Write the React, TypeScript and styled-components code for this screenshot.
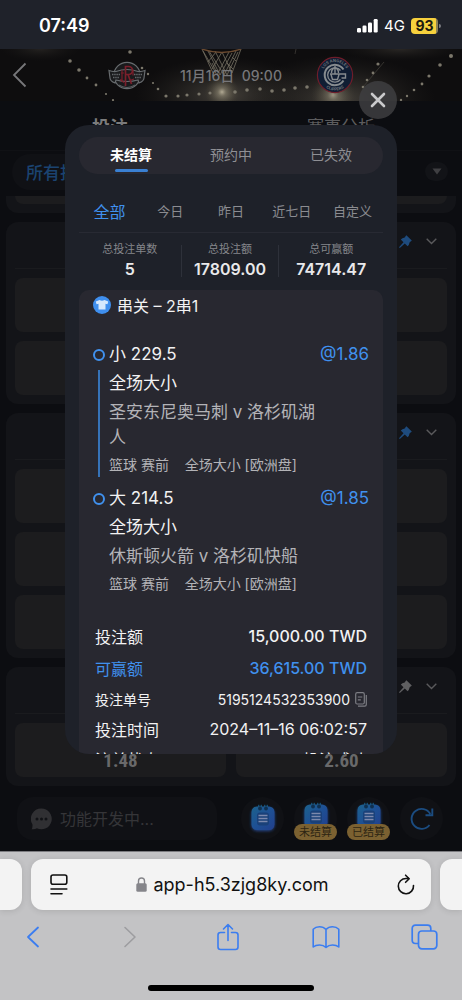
import React from "react";
import styled, { createGlobalStyle, css } from "styled-components";

const Global = createGlobalStyle`
  *, *::before, *::after { box-sizing: border-box; }
  body {
    margin: 0;
    background: #0c0d11;
    font-family: Inter, "Noto Sans CJK SC", sans-serif;
  }
  button, input {
    font-family: inherit;
    font-size: inherit;
    color: inherit;
    border: 0;
    margin: 0;
    padding: 0;
    background: none;
  }
  svg { display: block; flex: none; }
`;

const Page = styled.div`
  display: flex;
  flex-direction: column;
  min-height: 100vh;
`;

/* ---------- status bar ---------- */

const StatusBar = styled.header`
  display: flex;
  align-items: center;
  justify-content: space-between;
  height: 49px;
  padding: 2px 24px 0 39px;
  background: #1f222a;
  color: #fff;
`;

const Clock = styled.span`
  font-size: 18px;
  font-weight: 600;
`;

const StatusIcons = styled.div`
  display: flex;
  align-items: center;
  gap: 6px;
  font-size: 15px;
`;

const Battery = styled.span`
  position: relative;
  width: 27px;
  height: 16px;
  border-radius: 4px;
  background: linear-gradient(90deg, #f7d13d 25px, #8d8256 25px);
  color: #1c1a10;
  font-size: 14px;
  font-weight: 700;
  line-height: 16px;
  text-align: center;
  &::after {
    content: "";
    position: absolute;
    right: -3px;
    top: 6px;
    width: 2px;
    height: 4px;
    border-radius: 0 2px 2px 0;
    background: #7d7e83;
  }
`;

/* ---------- match page ---------- */

const Match = styled.main`
  position: relative;
  flex: 1;
  display: flex;
  flex-direction: column;
  background: #0c0d11;
`;

const Banner = styled.div`
  position: relative;
  display: grid;
  grid-template-columns: 74px 1fr auto 1fr 74px;
  align-items: center;
  height: 52px;
  overflow: hidden;
  color: #77777a;
`;

const Arena = styled.svg`
  position: absolute;
  inset: 0;
  width: 100%;
  height: 100%;
`;

const BannerItem = styled.div`
  position: relative;
  display: flex;
  justify-content: center;
`;

const BackButton = styled.button`
  position: relative;
  justify-self: start;
  padding-left: 12px;
`;

const Kickoff = styled.time`
  position: relative;
  font-size: 14px;
  font-weight: 500;
  white-space: nowrap;
`;

const MatchTabs = styled.nav`
  display: grid;
  grid-template-columns: 10fr 11fr;
  height: 50px;
  border-bottom: 1px solid #101115;
`;

const MatchTab = styled.button<{ $active?: boolean }>`
  color: ${(p) => (p.$active ? "#7b7b7c" : "#5c5c5e")};
  font-size: ${(p) => (p.$active ? 18 : 17)}px;
  font-weight: ${(p) => (p.$active ? 600 : 400)};
`;

const MarketBar = styled.div`
  display: flex;
  align-items: center;
  justify-content: space-between;
  height: 45px;
  padding: 0 14px 4px 12px;
`;

const MarketChip = styled.button`
  height: 36px;
  padding: 0 14px;
  border-radius: 18px;
  background: #101115;
  color: #1b4370;
  font-size: 17px;
  font-weight: 500;
`;

const FoldButton = styled.button`
  display: grid;
  place-items: center;
  width: 23px;
  height: 19px;
  border-radius: 10px;
  background: #121317;
`;

const MarketList = styled.div`
  display: flex;
  flex-direction: column;
  gap: 9px;
  padding: 0 6px;
`;

const Card = styled.section<{ $tail?: boolean }>`
  padding: 0 9px 9px;
  border-radius: ${(p) => (p.$tail ? "0 0 12px 12px" : "12px")};
  background: #131418;
`;

const CardHead = styled.div`
  display: flex;
  align-items: center;
  justify-content: flex-end;
  gap: 14px;
  height: 47px;
  margin-bottom: 9px;
  padding: 0 10px 8px;
  border-bottom: 1px solid #1a1b1e;
`;

const IconButton = styled.button`
  display: grid;
  place-items: center;
`;

const Rows = styled.div`
  display: grid;
  gap: 9px;
`;

const OddsRow = styled.div`
  display: grid;
  grid-template-columns: 1fr 1fr;
  gap: 10px;
`;

const Odds = styled.button<{ $tail?: boolean }>`
  display: flex;
  align-items: flex-end;
  justify-content: center;
  height: ${(p) => (p.$tail ? 8 : 54)}px;
  padding-bottom: 5px;
  border-radius: ${(p) => (p.$tail ? "0 0 8px 8px" : "8px")};
  background: #1c1c1e;
  color: #69696a;
  font-family: "Liberation Sans Narrow", "Roboto Condensed", "DejaVu Sans Condensed", sans-serif;
  font-size: 19px;
  font-weight: 700;
`;

const ActionBar = styled.div`
  display: flex;
  align-items: center;
  gap: 10px;
  padding: 11px 19px 10px 17px;
`;

const ChatBox = styled.label`
  flex: 1;
  min-width: 0;
  display: flex;
  align-items: center;
  gap: 8px;
  height: 43px;
  margin-right: 14px;
  padding: 0 14px;
  border-radius: 16px;
  background: #101115;
`;

const ChatInput = styled.input`
  flex: 1;
  min-width: 0;
  font-size: 16px;
  outline: 0;
  &::placeholder { color: #353538; opacity: 1; }
`;

const RoundButton = styled.button<{ $raised?: boolean }>`
  position: relative;
  flex: none;
  display: flex;
  justify-content: center;
  align-items: ${(p) => (p.$raised ? "flex-start" : "center")};
  width: 43px;
  height: 43px;
  padding-top: ${(p) => (p.$raised ? 4 : 0)}px;
  border-radius: 50%;
  background: #101115;
`;

const SettleBadge = styled.span`
  position: absolute;
  left: 0;
  right: 0;
  bottom: 0;
  height: 16px;
  border-radius: 8px;
  background: #7b6131;
  color: #2d2513;
  font-size: 11px;
  line-height: 16px;
  text-align: center;
`;

/* ---------- bet record dialog ---------- */

const Overlay = styled.div`
  position: absolute;
  inset: 0;
  display: flex;
  padding: 76px 65px 97px;
`;

const Dialog = styled.section`
  flex: 1;
  min-width: 0;
  display: flex;
  flex-direction: column;
  padding: 12px 14px 0;
  border-radius: 24px;
  background: #1e2129;
  overflow: hidden;
`;

const CloseButton = styled.button`
  position: absolute;
  top: 32px;
  right: 65px;
  display: grid;
  place-items: center;
  width: 38px;
  height: 38px;
  border-radius: 50%;
  background: rgba(62, 62, 65, 0.85);
`;

const StateTabs = styled.nav`
  flex: none;
  display: grid;
  grid-template-columns: repeat(3, 1fr);
  height: 37px;
  padding: 0 2px;
  border-radius: 19px;
  background: #282830;
`;

const StateTab = styled.button<{ $active?: boolean }>`
  display: flex;
  flex-direction: column;
  align-items: center;
  gap: 3px;
  padding-top: 7px;
  font-size: 14px;
  line-height: 22px;
  color: #8f8f94;
  ${(p) =>
    p.$active &&
    css`
      color: #fff;
      font-weight: 600;
      &::after {
        content: "";
        width: 33px;
        height: 3px;
        border-radius: 2px;
        background: #3a80d2;
      }
    `}
`;

const RangeTabs = styled.nav`
  flex: none;
  display: grid;
  grid-template-columns: repeat(5, 1fr);
  height: 44px;
  margin-top: 15px;
  border-bottom: 1px solid #282a33;
`;

const RangeTab = styled.button<{ $active?: boolean }>`
  white-space: nowrap;
  color: ${(p) => (p.$active ? "#4091ee" : "#8b8c91")};
  font-size: ${(p) => (p.$active ? 16 : 13)}px;
`;

const Stats = styled.dl`
  flex: none;
  display: grid;
  grid-template-columns: 102fr 98fr 105fr;
  margin: 12px 0 13px;
`;

const Stat = styled.div`
  display: flex;
  flex-direction: column;
  align-items: center;
  justify-content: center;
  height: 32px;
  & + & { border-left: 1px solid #2e313a; }
`;

const StatLabel = styled.dt`
  flex: none;
  color: #85868b;
  font-size: 11px;
  line-height: 16px;
`;

const StatValue = styled.dd`
  flex: none;
  margin: 0;
  color: #e9e9eb;
  font-size: 16px;
  font-weight: 600;
  line-height: 24px;
`;

const Ticket = styled.article`
  flex: 1 0 0;
  min-height: 0;
  overflow: hidden;
  border-radius: 10px 10px 0 0;
  background: #282830;
  color: #f2f2f3;
`;

const TicketHead = styled.h2`
  display: flex;
  align-items: center;
  gap: 6px;
  height: 30px;
  margin: 0 0 19px;
  padding: 0 14px;
  font-size: 16px;
  font-weight: 400;
`;

const Legs = styled.div`
  display: grid;
  gap: 6px;
  padding: 0 14px 0 13px;
`;

const Leg = styled.div`
  display: flex;
  gap: 4px;
`;

const Rail = styled.div<{ $linked?: boolean }>`
  flex: none;
  display: flex;
  flex-direction: column;
  align-items: center;
  gap: 9px;
  width: 13px;
  padding-top: 10px;
  &::before {
    content: "";
    width: 12px;
    height: 12px;
    border: 2px solid #4091ee;
    border-radius: 50%;
  }
  ${(p) =>
    p.$linked &&
    css`
      &::after {
        content: "";
        flex: 1;
        width: 2px;
        background: #3673b8;
      }
    `}
`;

const LegBody = styled.div`
  flex: 1;
  min-width: 0;
`;

const LegTitle = styled.div`
  display: flex;
  justify-content: space-between;
  font-size: 17px;
  line-height: 30px;
`;

const Price = styled.span`
  color: #4091ee;
`;

const LegMarket = styled.div`
  font-size: 17px;
  line-height: 28px;
`;

const LegTeams = styled.div`
  padding: 3px 46px 3px 0;
  color: #b3b3b7;
  font-size: 17px;
  line-height: 25px;
`;

const LegMeta = styled.div`
  color: #b3b3b7;
  font-size: 14px;
  line-height: 24px;
  white-space: pre;
`;

const Totals = styled.dl`
  margin: 24px 0 0;
  padding: 0 16px;
`;

const Line = styled.div<{ $tone?: "main" | "win" | "small" }>`
  display: flex;
  align-items: center;
  justify-content: space-between;
  height: ${(p) => (p.$tone === "main" || p.$tone === "win" ? 32 : 30)}px;
  color: ${(p) => (p.$tone === "win" ? "#4091ee" : "inherit")};
  font-size: ${(p) => (p.$tone === "small" ? 14 : 16)}px;
  white-space: nowrap;
  dd {
    display: flex;
    align-items: center;
    gap: 5px;
    margin: 0;
    font-weight: ${(p) => (p.$tone === "main" || p.$tone === "win" ? 500 : 400)};
  }
`;

/* ---------- browser chrome ---------- */

const Browser = styled.footer`
  display: flex;
  flex-direction: column;
  align-items: center;
  height: 149px;
  padding-top: 8px;
  background: #c3c3c5;
  box-shadow: inset 0 1px #7c7c80;
`;

const TabStrip = styled.div`
  display: flex;
  gap: 9px;
  width: 100%;
`;

const TabPeek = styled.div<{ $side: "left" | "right" }>`
  width: 22px;
  height: 51px;
  border-radius: ${(p) => (p.$side === "left" ? "0 12px 12px 0" : "12px 0 0 12px")};
  background: #f3f3f3;
  box-shadow: 0 1px 6px rgba(0, 0, 0, 0.12);
`;

const AddressBar = styled.div`
  flex: 1;
  display: flex;
  align-items: center;
  justify-content: space-between;
  height: 51px;
  padding: 0 16px 0 19px;
  border-radius: 12px;
  background: #f3f3f3;
  box-shadow: 0 1px 6px rgba(0, 0, 0, 0.12);
`;

const Address = styled.button`
  display: flex;
  align-items: center;
  gap: 6px;
  color: #111;
  font-size: 18px;
`;

const Toolbar = styled.nav`
  display: flex;
  align-items: center;
  justify-content: space-between;
  width: 100%;
  height: 56px;
  padding: 0 24px 2px 18px;
  button { width: 28px; }
`;

const HomeBar = styled.div`
  width: 166px;
  height: 6px;
  margin-top: 19px;
  border-radius: 3px;
  background: #000;
`;

/* ---------- drawings ---------- */

const lights: [number, number, number][] = [
  [70, 12, 1.8], [79, 21, 1.8], [87, 29, 1.4], [96, 36, 1.4], [106, 45, 1.1], [113, 51, 1.1],
  [130, 3, 1.8], [142, 19, 1.3], [148, 25, 1.2], [153, 34, 1.1], [158, 40, 1.3],
  [166, 47, 1.6], [178, 47, 1.6], [187, 46, 1.6], [199, 45, 1.6], [210, 44, 1.6],
  [235, 43, 1.8], [247, 41, 1.8], [260, 40, 1.8], [272, 42, 1.8], [284, 41, 1.8], [295, 39, 1.8], [307, 38, 1.8],
  [363, 38, 1.3], [367, 31, 1.3], [373, 24, 1.4], [378, 15, 1.6],
  [401, 51, 1.2], [407, 47, 1.2], [414, 41, 1.3], [422, 35, 1.4], [429, 27, 1.6], [440, 16, 1.8], [451, 7, 2],
];

const ArenaDrawing = () => (
  <Arena viewBox="0 0 462 52" preserveAspectRatio="xMidYMid slice" aria-hidden="true">
    <defs>
      <radialGradient id="glow">
        <stop offset="0" stopColor="#b3ab95" />
        <stop offset="0.25" stopColor="#8f8873" stopOpacity="0.6" />
        <stop offset="1" stopColor="#4a4434" stopOpacity="0" />
      </radialGradient>
      <radialGradient id="haze">
        <stop offset="0" stopColor="#57524a" stopOpacity="0.75" />
        <stop offset="1" stopColor="#2a2824" stopOpacity="0" />
      </radialGradient>
    </defs>
    <rect width="462" height="52" fill="#0e0d0e" />
    <ellipse cx="225" cy="46" rx="90" ry="38" fill="url(#haze)" />
    <ellipse cx="340" cy="50" rx="95" ry="44" fill="url(#haze)" />
    <ellipse cx="400" cy="0" rx="60" ry="12" fill="url(#haze)" opacity="0.5" />
    <ellipse cx="40" cy="0" rx="40" ry="12" fill="url(#haze)" opacity="0.4" />
    <circle cx="222" cy="43" r="17" fill="url(#glow)" />
    <circle cx="333" cy="46" r="22" fill="url(#glow)" opacity="0.8" />
    <g fill="none" stroke="#6b665a" strokeWidth="0.9">
      <path d="M202 0L213 24M208 2L220 26L232 4M215 2L227 26L238 3M222 3L232 24L241 0M236 2L224 26L209 2M229 3L217 26L203 2M222 3L212 20M216 3L208 13" />
      <path d="M232 8L236 12M227 14L233 20M212 14L216 22" />
    </g>
    <path d="M202 0Q222 7 241 0" fill="none" stroke="#6b4a30" strokeWidth="1.4" />
    <path d="M384 13L363 38M296 0L295 5" stroke="#45423c" strokeWidth="0.7" />
    <g fill="#7b776b">
      {lights.map(([x, y, r]) => (
        <circle key={`${x}-${y}`} cx={x} cy={y} r={r} />
      ))}
    </g>
  </Arena>
);

const HomeLogo = () => (
  <svg width="38" height="29" viewBox="0 0 38 29" role="img" aria-label="Rockets">
    <circle cx="19" cy="14.5" r="13.2" fill="#191a1c" stroke="#686c6f" strokeWidth="1.2" />
    <path d="M1 9.5Q5 11 8 10.5Q19 6.5 30 10.5Q33 11 37 9.5L36 17Q36 20 31 22L30 19Q19 22 8 19L7 22Q2 20 2 17Z" fill="#1a1b1d" stroke="#686c6f" strokeWidth="1.2" />
    <path d="M4 13.5h8M5 16.5h6M26 13.5h8M27 16.5h6" stroke="#63676a" strokeWidth="1.6" strokeDasharray="1.5 .7" />
    <g fill="none" stroke="#7b1f2b" strokeWidth="1.7">
      <path d="M17.500 25V5.500h3a3.800 3.800 0 0 1 0 8H17.500M20 13.500L23.500 23" />
      <path d="M14 9v12M12 18.500l4 3M25 9.500v5M13 12h3M22 19.500l4-1.500" strokeWidth="1.2" />
    </g>
    <path d="M11 24Q19 29 27 24" fill="none" stroke="#5e6265" strokeWidth="1" />
  </svg>
);

const AwayLogo = () => (
  <svg width="38" height="38" viewBox="0 0 38 38" role="img" aria-label="Los Angeles Clippers">
    <defs>
      <path id="arcTop" d="M6 19a13 13 0 0 1 26 0" />
      <path id="arcBottom" d="M3.500 19a15.500 15.500 0 0 0 31 0" />
    </defs>
    <circle cx="19" cy="19" r="17.600" fill="#101d33" stroke="#6f1d2a" strokeWidth="1.2" />
    <g fill="#6c7279" fontFamily="Inter, sans-serif" fontSize="4" fontWeight="700" textAnchor="middle">
      <text><textPath href="#arcTop" startOffset="50%">LOS ANGELES</textPath></text>
      <text><textPath href="#arcBottom" startOffset="50%">CLIPPERS</textPath></text>
    </g>
    <path d="M27.500 13.500A10.200 10.200 0 1 0 27.500 24.500" fill="none" stroke="#868b8f" strokeWidth="2" />
    <path d="M24.500 14.500A7.200 7.200 0 1 0 24.500 23.500" fill="none" stroke="#868b8f" strokeWidth="1.3" />
    <path d="M14 18h15.500v4h-4M15 18.500l1.500 5h5l1.500-5M19 10v8M15.500 17q0-4 3-5M22.500 17q0-4-3-5" fill="none" stroke="#868b8f" strokeWidth="1.4" />
  </svg>
);

const Pin = ({ color }: { color: string }) => (
  <svg width="13" height="13" viewBox="0 0 13 13" fill={color} aria-hidden="true">
    <path d="M7.400.2L12.800 5.600L11.800 6.500Q11 6.600 10.600 7.400Q10.200 9.800 8.600 11.200L5.800 8.500L.8 13L0 12.200L4.500 7.200L1.800 4.400Q3.200 2.800 5.600 2.400Q6.400 2 6.400 1.200Z" />
  </svg>
);

const Chevron = () => (
  <svg width="11" height="7" viewBox="0 0 11 7" fill="none" stroke="#5a5a5c" strokeWidth="1.4" aria-hidden="true">
    <path d="M.7.8L5.500 5.600L10.300.8" />
  </svg>
);

const Notepad = () => (
  <svg width="32" height="32" viewBox="0 0 32 32" aria-hidden="true">
    <defs>
      <linearGradient id="pad" x1="0" y1="0" x2="1" y2="1">
        <stop offset="0" stopColor="#1c628d" />
        <stop offset="0.5" stopColor="#1e5094" />
        <stop offset="1" stopColor="#223f8c" />
      </linearGradient>
      <filter id="padGlow" x="-30%" y="-30%" width="160%" height="160%">
        <feGaussianBlur stdDeviation="1.8" />
      </filter>
    </defs>
    <rect x="4.500" y="5" width="23" height="23" rx="6" fill="#26498f" filter="url(#padGlow)" />
    <rect x="4.500" y="3.500" width="23" height="23.500" rx="5.500" fill="url(#pad)" />
    <rect x="10" y="9.500" width="12" height="13" rx="3" fill="#1a4179" />
    <path d="M11.500 12.500h9M11.500 15.500h9M11.500 18.500h9" stroke="#7c89ad" strokeWidth="1.4" />
    <circle cx="13" cy="5.500" r="1.900" fill="#10304f" />
    <circle cx="19" cy="5.500" r="1.900" fill="#10304f" />
    <path d="M11.800 4V1.800M14.200 4V1.800M17.800 4V1.800M20.200 4V1.800" stroke="#1b6494" strokeWidth="1" />
  </svg>
);

const markets = [
  { pin: "#1e4b7d", rows: 2 },
  { pin: "#1e4b7d", rows: 3 },
  { pin: "#5f5f61", rows: 1, odds: ["1.48", "2.60"] },
];

const legs = [
  { pick: "小 229.5", price: "@1.86", teams: "圣安东尼奥马刺 v 洛杉矶湖人", linked: true },
  { pick: "大 214.5", price: "@1.85", teams: "休斯顿火箭 v 洛杉矶快船", linked: false },
];

const stats = [
  ["总投注单数", "5"],
  ["总投注额", "17809.00"],
  ["总可赢额", "74714.47"],
];

export default function App() {
  return (
    <Page>
      <Global />
      <StatusBar>
        <Clock>07:49</Clock>
        <StatusIcons>
          <svg width="21" height="14" viewBox="0 0 21 14" fill="#fff" aria-hidden="true">
            <rect x="0" y="9" width="4" height="4.500" rx="1.200" />
            <rect x="5.500" y="6.500" width="4" height="7" rx="1.200" />
            <rect x="11" y="3.500" width="4" height="10" rx="1.200" />
            <rect x="16.700" y="0" width="4" height="13.500" rx="1.200" />
          </svg>
          <span>4G</span>
          <Battery>93</Battery>
        </StatusIcons>
      </StatusBar>

      <Match>
        <Banner>
          <ArenaDrawing />
          <BackButton aria-label="返回">
            <svg width="15" height="26" viewBox="0 0 15 26" fill="none" stroke="#77777a" strokeWidth="1.8">
              <path d="M13.500 1.500L2 13L13.500 24.500" />
            </svg>
          </BackButton>
          <BannerItem><HomeLogo /></BannerItem>
          <Kickoff>11月16日&nbsp; 09:00</Kickoff>
          <BannerItem><AwayLogo /></BannerItem>
        </Banner>

        <MatchTabs>
          <MatchTab $active>投注</MatchTab>
          <MatchTab>赛事分析</MatchTab>
        </MatchTabs>

        <MarketBar>
          <MarketChip>所有投注</MarketChip>
          <FoldButton aria-label="收起">
            <svg width="10" height="7" viewBox="0 0 10 7" fill="#3f3f42"><path d="M.5.500h9L5 6.500Z" /></svg>
          </FoldButton>
        </MarketBar>

        <MarketList>
          <Card $tail>
            <OddsRow>
              <Odds $tail aria-label="赔率" />
              <Odds $tail aria-label="赔率" />
            </OddsRow>
          </Card>
          {markets.map((m, i) => (
            <Card key={i}>
              <CardHead>
                <IconButton aria-label="置顶"><Pin color={m.pin} /></IconButton>
                <IconButton aria-label="展开"><Chevron /></IconButton>
              </CardHead>
              <Rows>
                {Array.from({ length: m.rows }, (_, r) => (
                  <OddsRow key={r}>
                    <Odds aria-label="赔率">{m.odds?.[0]}</Odds>
                    <Odds aria-label="赔率">{m.odds?.[1]}</Odds>
                  </OddsRow>
                ))}
              </Rows>
            </Card>
          ))}
        </MarketList>

        <ActionBar>
          <ChatBox>
            <svg width="21" height="22" viewBox="0 0 21 22" aria-hidden="true">
              <path d="M10.500.5a10.400 10.400 0 1 1-4.600 19.800Q3.500 21.800.6 21.200Q1.700 19.500 1.500 16.500A10.400 10.400 0 0 1 10.500.5Z" fill="#303033" />
              <g fill="#111216"><circle cx="6" cy="11" r="1.500" /><circle cx="10.500" cy="11" r="1.500" /><circle cx="15" cy="11" r="1.500" /></g>
            </svg>
            <ChatInput aria-label="聊天" placeholder="功能开发中..." />
          </ChatBox>
          <RoundButton aria-label="注单"><Notepad /></RoundButton>
          <RoundButton $raised><Notepad /><SettleBadge>未结算</SettleBadge></RoundButton>
          <RoundButton $raised><Notepad /><SettleBadge>已结算</SettleBadge></RoundButton>
          <RoundButton aria-label="刷新">
            <svg width="24" height="24" viewBox="0 0 24 24" fill="none" stroke="#1b4c80" strokeWidth="1.9">
              <path d="M19.500 18A10 10 0 1 1 20.300 7M22.300 1.500V8.300H15.500" />
            </svg>
          </RoundButton>
        </ActionBar>

        <Overlay>
          <Dialog role="dialog" aria-label="注单">
            <StateTabs>
              <StateTab $active>未结算</StateTab>
              <StateTab>预约中</StateTab>
              <StateTab>已失效</StateTab>
            </StateTabs>
            <RangeTabs>
              <RangeTab $active>全部</RangeTab>
              <RangeTab>今日</RangeTab>
              <RangeTab>昨日</RangeTab>
              <RangeTab>近七日</RangeTab>
              <RangeTab>自定义</RangeTab>
            </RangeTabs>
            <Stats>
              {stats.map(([label, value]) => (
                <Stat key={label}>
                  <StatLabel>{label}</StatLabel>
                  <StatValue>{value}</StatValue>
                </Stat>
              ))}
            </Stats>
            <Ticket>
              <TicketHead>
                <svg width="18" height="18" viewBox="0 0 18 18" aria-hidden="true">
                  <circle cx="9" cy="9" r="9" fill="#3f8fee" />
                  <path d="M6.500 4Q9 5.600 11.500 4L15.200 5.500L14.500 8.300L12.500 7.800V13.500H5.500V7.800L3.500 8.300L2.800 5.500Z" fill="#d5e8fd" />
                </svg>
                串关 – 2串1
              </TicketHead>
              <Legs>
                {legs.map((leg) => (
                  <Leg key={leg.pick}>
                    <Rail $linked={leg.linked} />
                    <LegBody>
                      <LegTitle><span>{leg.pick}</span><Price>{leg.price}</Price></LegTitle>
                      <LegMarket>全场大小</LegMarket>
                      <LegTeams>{leg.teams}</LegTeams>
                      <LegMeta>{"篮球 赛前    全场大小 [欧洲盘]"}</LegMeta>
                    </LegBody>
                  </Leg>
                ))}
              </Legs>
              <Totals>
                <Line $tone="main"><dt>投注额</dt><dd>15,000.00 TWD</dd></Line>
                <Line $tone="win"><dt>可赢额</dt><dd>36,615.00 TWD</dd></Line>
                <Line $tone="small">
                  <dt>投注单号</dt>
                  <dd>
                    5195124532353900
                    <IconButton aria-label="复制">
                      <svg width="12" height="15" viewBox="0 0 12 15" fill="none" stroke="#7c7d83" strokeWidth="1.2">
                        <rect x=".7" y=".7" width="8.600" height="11.300" rx="1.500" />
                        <path d="M2.800 5h4.500M2.800 7.800h3M11.300 3v9.500q0 1.600-1.600 1.600H3" />
                      </svg>
                    </IconButton>
                  </dd>
                </Line>
                <Line><dt>投注时间</dt><dd>2024–11–16 06:02:57</dd></Line>
                <Line><dt>注单状态</dt><dd>投注成功</dd></Line>
              </Totals>
            </Ticket>
          </Dialog>
          <CloseButton aria-label="关闭">
            <svg width="16" height="16" viewBox="0 0 16 16" stroke="#c9c9cb" strokeWidth="2.6" strokeLinecap="round">
              <path d="M2 2L14 14M14 2L2 14" />
            </svg>
          </CloseButton>
        </Overlay>
      </Match>

      <Browser>
        <TabStrip>
          <TabPeek $side="left" />
          <AddressBar>
            <IconButton aria-label="页面设置">
              <svg width="18" height="21" viewBox="0 0 18 21" fill="none" stroke="#111" strokeWidth="1.6" strokeLinecap="round">
                <rect x="1" y="1" width="15.800" height="9.200" rx="2" />
                <path d="M1 15h15.800M1 19.700h11" />
              </svg>
            </IconButton>
            <Address>
              <svg width="11" height="15" viewBox="0 0 11 15" aria-hidden="true">
                <path d="M2.500 7V4a3 3 0 0 1 6 0v3" fill="none" stroke="#85858a" strokeWidth="1.4" />
                <rect x=".3" y="6.300" width="10.400" height="8.400" rx="1.500" fill="#85858a" />
              </svg>
              app-h5.3zjg8ky.com
            </Address>
            <IconButton aria-label="重新载入">
              <svg width="18" height="21" viewBox="0 0 18 21" fill="none" stroke="#111" strokeWidth="1.6" strokeLinecap="round" strokeLinejoin="round">
                <path d="M16.500 11.500A7.600 7.600 0 1 1 9 4.500L12 4.700M8.600 1.200L12.200 4.700L8.600 8.300" />
              </svg>
            </IconButton>
          </AddressBar>
          <TabPeek $side="right" />
        </TabStrip>
        <Toolbar>
          <IconButton aria-label="后退">
            <svg width="15" height="22" viewBox="0 0 15 22" fill="none" stroke="#3b7df0" strokeWidth="1.8" strokeLinecap="round" strokeLinejoin="round">
              <path d="M13 1.500L3 11L13 20.500" />
            </svg>
          </IconButton>
          <IconButton aria-label="前进">
            <svg width="15" height="22" viewBox="0 0 15 22" fill="none" stroke="#9d9da0" strokeWidth="1.6" strokeLinecap="round" strokeLinejoin="round">
              <path d="M2 1.500L12 11L2 20.500" />
            </svg>
          </IconButton>
          <IconButton aria-label="分享">
            <svg width="24" height="28" viewBox="0 0 24 28" fill="none" stroke="#3b7df0" strokeWidth="1.6" strokeLinecap="round" strokeLinejoin="round">
              <path d="M8.500 9.500H4.500Q2 9.500 2 12V24Q2 26.500 4.500 26.500H19.500Q22 26.500 22 24V12Q22 9.500 19.500 9.500H15.500M12 17.500V1.500M7.500 6L12 1.500L16.500 6" />
            </svg>
          </IconButton>
          <IconButton aria-label="书签">
            <svg width="28" height="24" viewBox="0 0 28 24" fill="none" stroke="#3b7df0" strokeWidth="1.6" strokeLinejoin="round">
              <path d="M14 4.500Q11.500 1.800 7.500 1.800Q3.500 1.800 1.200 4.200V22Q3.500 20 7.500 20Q11.500 20 14 22.500Q16.500 20 20.500 20Q24.500 20 26.800 22V4.200Q24.500 1.800 20.500 1.800Q16.500 1.800 14 4.500V22" />
            </svg>
          </IconButton>
          <IconButton aria-label="标签页">
            <svg width="27" height="26" viewBox="0 0 27 26" fill="none" stroke="#3b7df0" strokeWidth="1.7">
              <path d="M7.500 19.500H4.500Q1.200 19.500 1.200 16.200V4.500Q1.200 1.200 4.500 1.200H16.500Q19.800 1.200 19.800 4.500V7" />
              <rect x="7.500" y="7" width="18.300" height="17.800" rx="3.300" />
            </svg>
          </IconButton>
        </Toolbar>
        <HomeBar />
      </Browser>
    </Page>
  );
}
